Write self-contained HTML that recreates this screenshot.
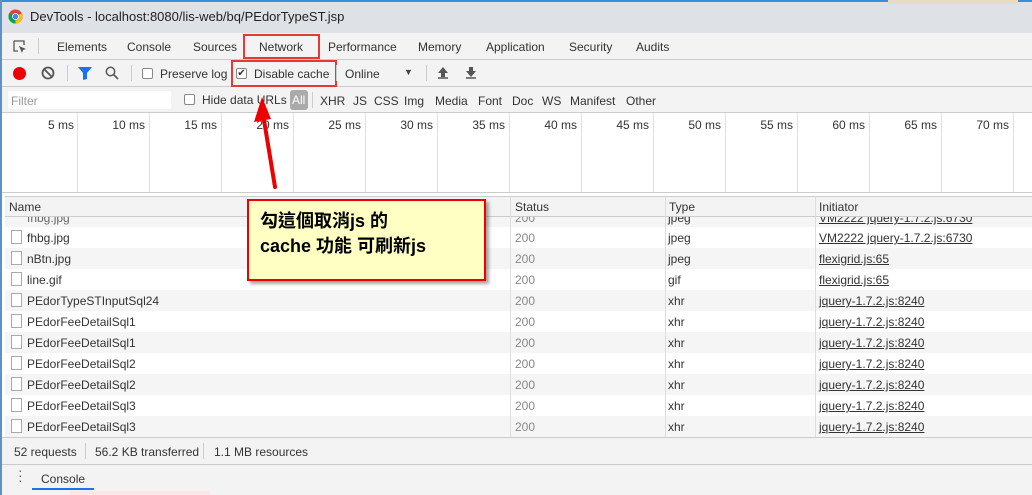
<!DOCTYPE html>
<html><head><meta charset="utf-8"><style>
*{margin:0;padding:0;box-sizing:border-box}
body{width:1032px;height:495px;overflow:hidden;background:#fff;font-family:"Liberation Sans","Noto Sans CJK TC",sans-serif;font-size:12px;color:#333;position:relative}
.a{position:absolute;white-space:nowrap}
.title{left:0;top:0;width:1032px;height:33px;background:#dee1e6;border-top:2px solid #3b8fd9}
.tabs{left:0;top:33px;width:1032px;height:27px;background:#f3f3f3;border-bottom:1px solid #ccc}
.tb{left:0;top:60px;width:1032px;height:27px;background:#f3f3f3;border-bottom:1px solid #ccc}
.fr{left:0;top:87px;width:1032px;height:26px;background:#f3f3f3;border-bottom:1px solid #ccc}
.gl{position:absolute;top:113px;height:79px;width:1px;background:#e0e0e0}
.ms{position:absolute;top:118px;text-align:right;width:60px;color:#333}
.cb{display:inline-block;width:11px;height:11px;border:1px solid #888;background:#fff;border-radius:2px}
.row{position:absolute;left:5px;width:1027px;height:21px;font-size:12px}
.row span{position:absolute;top:4px}
.ic{position:absolute;left:6px;top:3px;width:11px;height:14px;border:1px solid #aaa;background:#fff}
.u{text-decoration:underline;color:#333}
.g{color:#888}
</style></head><body>
<div class="a" style="left:0;top:0;width:2px;height:495px;background:#5b93c9;z-index:5"></div>
<div class="a title"></div>
<svg class="a" style="left:8px;top:9px" width="15" height="15" viewBox="0 0 16 16"><circle cx="8" cy="8" r="7.5" fill="#db4437"/><path d="M8 8 L14.5 4.5 A7.5 7.5 0 0 1 8 15.5Z" fill="#f4c20d"/><path d="M8 8 L8 15.5 A7.5 7.5 0 0 1 1.5 4.5Z" fill="#0f9d58"/><circle cx="8" cy="8" r="3.6" fill="#fff"/><circle cx="8" cy="8" r="2.8" fill="#4285f4"/></svg>
<div class="a" style="left:30px;top:9px;font-size:13px;color:#222">DevTools - localhost:8080/lis-web/bq/PEdorTypeST.jsp</div>
<div class="a" style="left:888px;top:0;width:130px;height:4px;background:#e8dcc0"></div>
<div class="a tabs"></div>
<svg class="a" style="left:13px;top:40px" width="14" height="14" viewBox="0 0 14 14"><path d="M1 1h10v4M1 1v10h4" fill="none" stroke="#555" stroke-width="1.3"/><path d="M6 6l7 3-3 1-1 3z" fill="#555"/></svg>
<div class="a" style="left:38px;top:38px;width:1px;height:16px;background:#ccc"></div>
<div class="a" style="left:57px;top:40px;color:#333">Elements</div>
<div class="a" style="left:127px;top:40px">Console</div>
<div class="a" style="left:193px;top:40px">Sources</div>
<div class="a" style="left:243px;top:34px;width:77px;height:25px;border:2px solid #e53935"></div>
<div class="a" style="left:259px;top:40px">Network</div>
<div class="a" style="left:328px;top:40px">Performance</div>
<div class="a" style="left:418px;top:40px">Memory</div>
<div class="a" style="left:486px;top:40px">Application</div>
<div class="a" style="left:569px;top:40px">Security</div>
<div class="a" style="left:636px;top:40px">Audits</div>
<div class="a tb"></div>
<div class="a" style="left:13px;top:67px;width:13px;height:13px;border-radius:50%;background:#e00"></div>
<svg class="a" style="left:41px;top:66px" width="14" height="14" viewBox="0 0 14 14"><circle cx="7" cy="7" r="5.5" fill="none" stroke="#555" stroke-width="1.8"/><path d="M3 3l8 8" stroke="#555" stroke-width="1.8"/></svg>
<div class="a" style="left:67px;top:65px;width:1px;height:16px;background:#ccc"></div>
<svg class="a" style="left:78px;top:67px" width="14" height="13" viewBox="0 0 14 13"><path d="M0 0h14l-5 6v6l-4 1V6z" fill="#1a73e8"/></svg>
<svg class="a" style="left:105px;top:66px" width="14" height="14" viewBox="0 0 14 14"><circle cx="5.5" cy="5.5" r="4.2" fill="none" stroke="#555" stroke-width="1.5"/><path d="M8.5 8.5l4.5 4.5" stroke="#555" stroke-width="1.6"/></svg>
<div class="a" style="left:131px;top:65px;width:1px;height:16px;background:#ccc"></div>
<span class="a cb" style="left:142px;top:68px"></span>
<div class="a" style="left:160px;top:67px">Preserve log</div>
<div class="a" style="left:231px;top:60px;width:106px;height:27px;border:2px solid #e53935"></div>
<span class="a cb" style="left:236px;top:68px;font-size:10px;line-height:9px;text-align:center;color:#333">✔</span>
<div class="a" style="left:254px;top:67px">Disable cache</div>
<div class="a" style="left:336px;top:65px;width:1px;height:16px;background:#ccc"></div>
<div class="a" style="left:345px;top:67px">Online</div>
<div class="a" style="left:404px;top:67px;font-size:9px;color:#444">▼</div>
<div class="a" style="left:426px;top:65px;width:1px;height:16px;background:#ccc"></div>
<svg class="a" style="left:437px;top:66px" width="12" height="13" viewBox="0 0 12 13"><path d="M6 1l5 6H8v4H4V7H1z" fill="#555"/><path d="M1 12h10" stroke="#555" stroke-width="1.5"/></svg>
<svg class="a" style="left:465px;top:66px" width="12" height="13" viewBox="0 0 12 13"><path d="M6 11l5-6H8V1H4v4H1z" fill="#555"/><path d="M1 12h10" stroke="#555" stroke-width="1.5"/></svg>
<div class="a fr"></div>
<div class="a" style="left:8px;top:91px;width:163px;height:18px;background:#fff;color:#999;padding:3px 3px;font-size:12px">Filter</div>
<span class="a cb" style="left:184px;top:94px"></span>
<div class="a" style="left:202px;top:93px">Hide data URLs</div>
<div class="a" style="left:290px;top:90px;width:18px;height:20px;background:#aaa;border-radius:3px;color:#fff;font-size:12px;padding:3px 2px">All</div>
<div class="a" style="left:312px;top:92px;width:1px;height:16px;background:#ccc"></div>
<div class="a" style="left:320px;top:94px;word-spacing:0">XHR</div>
<div class="a" style="left:353px;top:94px">JS</div>
<div class="a" style="left:374px;top:94px">CSS</div>
<div class="a" style="left:404px;top:94px">Img</div>
<div class="a" style="left:435px;top:94px">Media</div>
<div class="a" style="left:478px;top:94px">Font</div>
<div class="a" style="left:512px;top:94px">Doc</div>
<div class="a" style="left:542px;top:94px">WS</div>
<div class="a" style="left:570px;top:94px">Manifest</div>
<div class="a" style="left:626px;top:94px">Other</div>
<div class="gl" style="left:77px"></div><div class="ms" style="left:14px">5 ms</div>
<div class="gl" style="left:149px"></div><div class="ms" style="left:85px">10 ms</div>
<div class="gl" style="left:221px"></div><div class="ms" style="left:157px">15 ms</div>
<div class="gl" style="left:293px"></div><div class="ms" style="left:229px">20 ms</div>
<div class="gl" style="left:365px"></div><div class="ms" style="left:301px">25 ms</div>
<div class="gl" style="left:437px"></div><div class="ms" style="left:373px">30 ms</div>
<div class="gl" style="left:509px"></div><div class="ms" style="left:445px">35 ms</div>
<div class="gl" style="left:581px"></div><div class="ms" style="left:517px">40 ms</div>
<div class="gl" style="left:653px"></div><div class="ms" style="left:589px">45 ms</div>
<div class="gl" style="left:725px"></div><div class="ms" style="left:661px">50 ms</div>
<div class="gl" style="left:797px"></div><div class="ms" style="left:733px">55 ms</div>
<div class="gl" style="left:869px"></div><div class="ms" style="left:805px">60 ms</div>
<div class="gl" style="left:941px"></div><div class="ms" style="left:877px">65 ms</div>
<div class="gl" style="left:1013px"></div><div class="ms" style="left:949px">70 ms</div>
<div class="a" style="left:0;top:192px;width:1032px;height:1px;background:#ccc"></div>
<div class="a" style="left:5px;top:196px;width:1027px;height:21px;background:#f3f3f3;border-top:1px solid #ccc;border-bottom:1px solid #ccc"></div>
<div class="a" style="left:9px;top:200px">Name</div>
<div class="a" style="left:515px;top:200px">Status</div>
<div class="a" style="left:669px;top:200px">Type</div>
<div class="a" style="left:819px;top:200px">Initiator</div>
<div class="row" style="top:217px;height:10px;background:#f5f5f5;overflow:hidden"><span style="left:22px;top:-6px;color:#666">fhbg.jpg</span><span style="left:510px;top:-6px" class="g">200</span><span style="left:663px;top:-6px">jpeg</span><span style="left:814px;top:-6px" class="u">VM2222 jquery-1.7.2.js:6730</span></div>
<div class="row" style="top:227px;background:#fff"><i class="ic"></i><span style="left:22px">fhbg.jpg</span><span style="left:510px" class="g">200</span><span style="left:663px">jpeg</span><span style="left:814px" class="u">VM2222 jquery-1.7.2.js:6730</span></div>
<div class="row" style="top:248px;background:#f5f5f5"><i class="ic"></i><span style="left:22px">nBtn.jpg</span><span style="left:510px" class="g">200</span><span style="left:663px">jpeg</span><span style="left:814px" class="u">flexigrid.js:65</span></div>
<div class="row" style="top:269px;background:#fff"><i class="ic"></i><span style="left:22px">line.gif</span><span style="left:510px" class="g">200</span><span style="left:663px">gif</span><span style="left:814px" class="u">flexigrid.js:65</span></div>
<div class="row" style="top:290px;background:#f5f5f5"><i class="ic"></i><span style="left:22px">PEdorTypeSTInputSql24</span><span style="left:510px" class="g">200</span><span style="left:663px">xhr</span><span style="left:814px" class="u">jquery-1.7.2.js:8240</span></div>
<div class="row" style="top:311px;background:#fff"><i class="ic"></i><span style="left:22px">PEdorFeeDetailSql1</span><span style="left:510px" class="g">200</span><span style="left:663px">xhr</span><span style="left:814px" class="u">jquery-1.7.2.js:8240</span></div>
<div class="row" style="top:332px;background:#f5f5f5"><i class="ic"></i><span style="left:22px">PEdorFeeDetailSql1</span><span style="left:510px" class="g">200</span><span style="left:663px">xhr</span><span style="left:814px" class="u">jquery-1.7.2.js:8240</span></div>
<div class="row" style="top:353px;background:#fff"><i class="ic"></i><span style="left:22px">PEdorFeeDetailSql2</span><span style="left:510px" class="g">200</span><span style="left:663px">xhr</span><span style="left:814px" class="u">jquery-1.7.2.js:8240</span></div>
<div class="row" style="top:374px;background:#f5f5f5"><i class="ic"></i><span style="left:22px">PEdorFeeDetailSql2</span><span style="left:510px" class="g">200</span><span style="left:663px">xhr</span><span style="left:814px" class="u">jquery-1.7.2.js:8240</span></div>
<div class="row" style="top:395px;background:#fff"><i class="ic"></i><span style="left:22px">PEdorFeeDetailSql3</span><span style="left:510px" class="g">200</span><span style="left:663px">xhr</span><span style="left:814px" class="u">jquery-1.7.2.js:8240</span></div>
<div class="row" style="top:416px;background:#f5f5f5"><i class="ic"></i><span style="left:22px">PEdorFeeDetailSql3</span><span style="left:510px" class="g">200</span><span style="left:663px">xhr</span><span style="left:814px" class="u">jquery-1.7.2.js:8240</span></div>
<div class="a" style="left:510px;top:196px;width:1px;height:241px;background:#ddd"></div>
<div class="a" style="left:665px;top:196px;width:1px;height:241px;background:#ddd"></div>
<div class="a" style="left:815px;top:196px;width:1px;height:241px;background:#ddd"></div>
<div class="a" style="left:0;top:437px;width:1032px;height:28px;background:#f3f3f3;border-top:1px solid #ccc;border-bottom:1px solid #ccc"></div>
<div class="a" style="left:14px;top:445px">52 requests</div>
<div class="a" style="left:85px;top:443px;width:1px;height:16px;background:#ccc"></div>
<div class="a" style="left:95px;top:445px">56.2 KB transferred</div>
<div class="a" style="left:203px;top:443px;width:1px;height:16px;background:#ccc"></div>
<div class="a" style="left:214px;top:445px">1.1 MB resources</div>
<div class="a" style="left:0;top:465px;width:1032px;height:30px;background:#f3f3f3"></div>
<div class="a" style="left:18px;top:468px;color:#666;font-size:14px;line-height:5px">·<br>·<br>·</div>
<div class="a" style="left:41px;top:472px;color:#333">Console</div>
<div class="a" style="left:32px;top:488px;width:62px;height:2px;background:#1a73e8"></div>
<div class="a" style="left:70px;top:491px;width:140px;height:4px;background:#fde8e8"></div>
<div class="a" style="left:247px;top:199px;width:239px;height:82px;background:#ffffc4;border:2px solid #e00;box-shadow:3px 3px 3px rgba(0,0,0,.35);padding:8px 0 0 11px;font-weight:bold;font-size:18px;line-height:25px;color:#000;white-space:normal">勾這個取消js 的<br>cache 功能 可刷新js</div>
<svg class="a" style="left:250px;top:92px" width="40" height="100" viewBox="0 0 40 100"><path d="M25 95 L13 22" stroke="#e00" stroke-width="4" stroke-linecap="round"/><path d="M12 5 L4 30 L21 27 Z" fill="#e00"/></svg>
</body></html>
